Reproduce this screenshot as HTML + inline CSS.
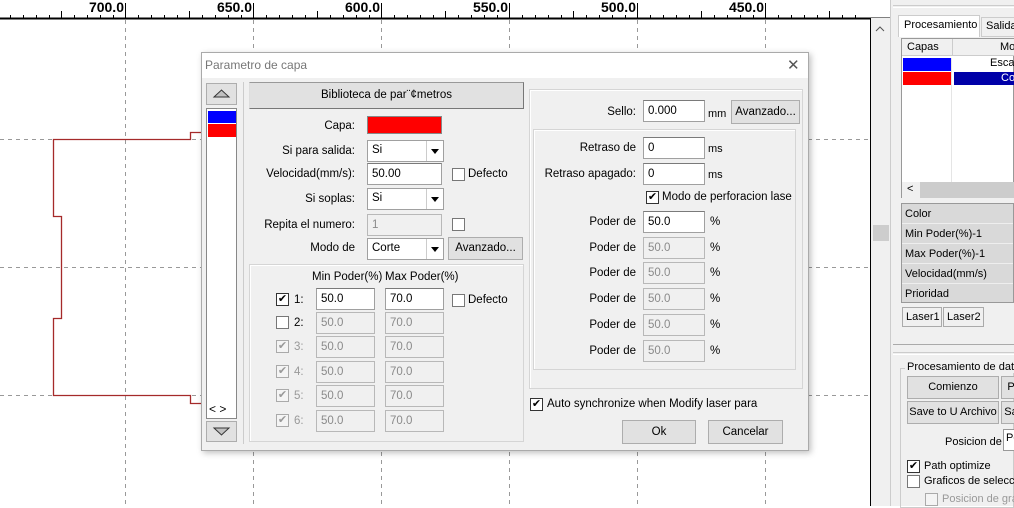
<!DOCTYPE html>
<html><head><meta charset="utf-8"><style>
*{box-sizing:border-box;margin:0;padding:0}
body{width:1014px;height:506px;overflow:hidden;position:relative;background:#fff;font-family:"Liberation Sans",sans-serif;font-size:11.5px;color:#000}
.a{position:absolute}
.lbl{position:absolute;text-align:right;white-space:nowrap}
.t{position:absolute;white-space:nowrap}
.in{position:absolute;background:#fff;border:1px solid #a0a0a0;border-top-color:#7a7a7a;padding:2px 4px;height:22px;line-height:16px}
.dis{background:#f0f0f0;color:#8a8a8a;border-color:#b8b8b8}
.btn{position:absolute;background:#e1e1e1;border:1px solid #adadad;text-align:center;line-height:20px}
.cb{position:absolute;width:13px;height:13px;border:1px solid #333;background:#fff;font-size:11px;line-height:11px;text-align:center}
.cbd{border-color:#aaa;color:#999;background:#f4f4f4}
.grp{position:absolute;border:1px solid #d5d5d5;box-shadow:inset 1px 1px 0 #fff}
.combo{position:absolute;background:#fff;border:1px solid #a0a0a0;height:22px;padding:3px 4px}
.combo:after{content:"";position:absolute;right:0;top:0;width:16px;height:20px;border-left:1px solid #ccc;background:#fff}
.combo i{position:absolute;right:4px;top:8px;border:4px solid transparent;border-top:5px solid #000;z-index:2}
</style></head><body>
<svg class="a" style="left:0;top:0" width="893" height="506">
<rect width="893" height="506" fill="#fff"/>
<line x1="0" y1="18.5" x2="893" y2="18.5" stroke="#000" stroke-width="2"/>
<g stroke="#000" stroke-width="1">
<line x1="125.5" y1="3" x2="125.5" y2="18"/><line x1="253.5" y1="3" x2="253.5" y2="18"/><line x1="381.5" y1="3" x2="381.5" y2="18"/><line x1="509.5" y1="3" x2="509.5" y2="18"/><line x1="637.5" y1="3" x2="637.5" y2="18"/><line x1="765.5" y1="3" x2="765.5" y2="18"/>
<line x1="61.5" y1="11" x2="61.5" y2="18"/><line x1="189.5" y1="11" x2="189.5" y2="18"/><line x1="317.5" y1="11" x2="317.5" y2="18"/><line x1="445.5" y1="11" x2="445.5" y2="18"/><line x1="573.5" y1="11" x2="573.5" y2="18"/><line x1="701.5" y1="11" x2="701.5" y2="18"/><line x1="829.5" y1="11" x2="829.5" y2="18"/>
</g>
<g stroke="#000" stroke-width="1">
<path d="M10.5 15v3M23.5 15v3M36.5 15v3M49.5 15v3M74.5 15v3M87.5 15v3M100.5 15v3M113.5 15v3M138.5 15v3M151.5 15v3M164.5 15v3M177.5 15v3M202.5 15v3M215.5 15v3M228.5 15v3M241.5 15v3M266.5 15v3M279.5 15v3M292.5 15v3M305.5 15v3M330.5 15v3M343.5 15v3M356.5 15v3M369.5 15v3M394.5 15v3M407.5 15v3M420.5 15v3M433.5 15v3M458.5 15v3M471.5 15v3M484.5 15v3M497.5 15v3M522.5 15v3M535.5 15v3M548.5 15v3M561.5 15v3M586.5 15v3M599.5 15v3M612.5 15v3M625.5 15v3M650.5 15v3M663.5 15v3M676.5 15v3M689.5 15v3M714.5 15v3M727.5 15v3M740.5 15v3M753.5 15v3M778.5 15v3M791.5 15v3M804.5 15v3M817.5 15v3M842.5 15v3M855.5 15v3"/></g>
<g font-family="Liberation Sans" font-weight="bold" font-size="14" fill="#000" text-anchor="end">
<text x="124" y="12">700.0</text><text x="252" y="12">650.0</text><text x="380" y="12">600.0</text><text x="508" y="12">550.0</text><text x="636" y="12">500.0</text><text x="764" y="12">450.0</text></g>
<g stroke="#999" stroke-dasharray="4,4" stroke-width="1">
<line x1="125.5" y1="20" x2="125.5" y2="506"/><line x1="253.5" y1="20" x2="253.5" y2="506"/><line x1="381.5" y1="20" x2="381.5" y2="506"/><line x1="509.5" y1="20" x2="509.5" y2="506"/><line x1="637.5" y1="20" x2="637.5" y2="506"/><line x1="765.5" y1="20" x2="765.5" y2="506"/>
<line x1="0" y1="139.5" x2="870" y2="139.5"/><line x1="0" y1="267.5" x2="870" y2="267.5"/><line x1="0" y1="395.5" x2="870" y2="395.5"/></g>
<polyline points="201,132.5 190.5,132.5 190.5,139.5 53.5,139.5 53.5,216.5 61.5,216.5 61.5,318.5 53.5,318.5 53.5,395.5 190.5,395.5 190.5,403.5 201,403.5" fill="none" stroke="#a52a2a" stroke-width="1.3"/>
<rect x="870" y="18" width="20" height="488" fill="#f0f0f0"/>
<line x1="870.5" y1="18" x2="870.5" y2="506" stroke="#000"/>
<path d="M876 31l4-4 4 4" fill="none" stroke="#555"/>
<rect x="873" y="225" width="16" height="16" fill="#cdcdcd"/>
</svg>
<div class="a" style="left:890px;top:0;width:124px;height:506px;background:#f0f0f0;border-left:1px solid #ccc"></div>
<div class="a" style="left:893px;top:5px;width:121px;height:3px;border-top:1px solid #ccc;border-bottom:1px solid #fff"></div>
<div class="a" style="left:898px;top:15px;width:82px;height:22px;background:#fff;border:1px solid #ccc;border-bottom:none;padding:3px 5px;font-size:11px">Procesamiento</div>
<div class="a" style="left:981px;top:17px;width:40px;height:20px;border:1px solid #ccc;padding:2px 4px;font-size:11px">Salida</div>
<div class="a" style="left:901px;top:38px;width:113px;height:160px;background:#fff;border:1px solid #999"></div>
<div class="a" style="left:902px;top:39px;width:112px;height:17px;background:#f0f0f0;border-bottom:1px solid #ccc;font-size:11px"><span class="t" style="left:5px;top:2px">Capas</span><span class="t" style="left:98px;top:2px">Mo</span><span class="a" style="left:50px;top:0;width:1px;height:17px;background:#ccc"></span></div>
<div class="a" style="left:903px;top:58px;width:48px;height:13px;background:#0000ff"></div>
<div class="t" style="left:990px;top:57px;font-size:11px">Esca</div>
<div class="a" style="left:903px;top:72px;width:48px;height:13px;background:#ff0000"></div>
<div class="a" style="left:954px;top:72px;width:60px;height:13px;background:#0000a8;color:#fff;font-size:11px;padding-left:47px;line-height:13px">Co</div>
<div class="a" style="left:951px;top:58px;width:1px;height:124px;background:#e5e5e5"></div>
<div class="a" style="left:902px;top:182px;width:112px;height:16px;background:#f0f0f0"><div class="a" style="left:18px;top:0;width:94px;height:16px;background:#ccc"></div><span class="t" style="left:5px;top:1px;font-size:11px">&lt;</span></div>
<div class="a" style="left:901px;top:203px;width:113px;height:100px;background:#d9d9d9;border:1px solid #999;font-size:11px">
<div style="height:20px;padding:4px 3px;border-bottom:1px solid #eee">Color</div><div style="height:20px;padding:4px 3px;border-bottom:1px solid #eee">Min Poder(%)-1</div><div style="height:20px;padding:4px 3px;border-bottom:1px solid #eee">Max Poder(%)-1</div><div style="height:20px;padding:4px 3px;border-bottom:1px solid #eee">Velocidad(mm/s)</div><div style="height:20px;padding:4px 3px">Prioridad</div></div>
<div class="a" style="left:902px;top:307px;width:40px;height:20px;border:1px solid #aaa;background:#f0f0f0;font-size:11px;padding:3px 3px">Laser1</div>
<div class="a" style="left:943px;top:307px;width:41px;height:20px;border:1px solid #aaa;background:#f0f0f0;font-size:11px;padding:3px 3px">Laser2</div>
<div class="a" style="left:893px;top:344px;width:121px;height:1px;background:#aaa"></div>
<div class="a" style="left:893px;top:352px;width:121px;height:3px;border-top:1px solid #ccc;border-bottom:1px solid #fff"></div>
<div class="a" style="left:900px;top:368px;width:114px;height:140px;border:1px solid #ccc"></div>
<div class="t" style="left:905px;top:361px;background:#f0f0f0;font-size:11px;padding:0 2px">Procesamiento de datos</div>
<div class="btn" style="left:907px;top:376px;width:92px;height:23px;font-size:11px">Comienzo</div>
<div class="btn" style="left:1001px;top:376px;width:20px;height:23px;font-size:11px">P</div>
<div class="btn" style="left:907px;top:401px;width:92px;height:23px;font-size:11px">Save to U Archivo</div>
<div class="btn" style="left:1001px;top:401px;width:20px;height:23px;font-size:11px">Sa</div>
<div class="t" style="left:945px;top:436px;font-size:11px">Posicion de</div>
<div class="a" style="left:1003px;top:429px;width:15px;height:22px;background:#fff;border:1px solid #999;font-size:11px;padding:2px">Po</div>
<div class="cb" style="left:907px;top:460px">✔</div><div class="t" style="left:924px;top:460px;font-size:11px">Path optimize</div>
<div class="cb" style="left:907px;top:475px;border-color:#777"></div><div class="t" style="left:924px;top:475px;font-size:11px">Graficos de seleccion</div>
<div class="cb cbd" style="left:925px;top:493px"></div><div class="t" style="left:942px;top:493px;font-size:11px;color:#999">Posicion de grafico</div>

<div class="a" style="left:201px;top:52px;width:608px;height:399px;background:#f0f0f0;border:1px solid #aaa;box-shadow:2px 2px 6px rgba(0,0,0,.25)"></div>
<div class="a" style="left:202px;top:53px;width:606px;height:25px;background:#fff"></div>
<div class="t" style="left:205px;top:58px;font-size:12px;color:#777">Parametro de capa</div>
<div class="t" style="left:787px;top:56px;font-size:15px;color:#555">✕</div>

<div class="btn" style="left:206px;top:83px;width:31px;height:22px"><svg width="29" height="20"><path d="M7 13L14.5 6L22 13Z" fill="#c0c0c0" stroke="#333"/></svg></div>
<div class="a" style="left:206px;top:108px;width:31px;height:311px;background:#fff;border:1px solid #888"></div>
<div class="a" style="left:208px;top:111px;width:28px;height:12px;background:#0000ff"></div>
<div class="a" style="left:208px;top:124px;width:28px;height:13px;background:#ff0000"></div>
<div class="t" style="left:209px;top:402px;font-size:12px">&lt; &gt;</div>
<div class="btn" style="left:206px;top:421px;width:31px;height:21px"><svg width="29" height="19"><path d="M7 6L14.5 13L22 6Z" fill="#c0c0c0" stroke="#333"/></svg></div>
<div class="a" style="left:243px;top:82px;width:1px;height:362px;background:#ccc"></div>

<div class="btn" style="left:249px;top:82px;width:275px;height:27px;line-height:25px;border-color:#999 #777 #777 #ddd">Biblioteca de par¨¢metros</div>
<div class="lbl" style="left:250px;width:105px;top:120px">Capa:</div>
<div class="a" style="left:367px;top:116px;width:75px;height:18px;background:#ff0000;border:1px solid #888"></div>
<div class="lbl" style="left:250px;width:105px;top:145px">Si para salida:</div>
<div class="combo" style="left:367px;top:140px;width:77px">Si<i></i></div>
<div class="lbl" style="left:250px;width:105px;top:168px">Velocidad(mm/s):</div>
<div class="in" style="left:367px;top:163px;width:75px">50.00</div>
<div class="cb" style="left:452px;top:168px;border-color:#777"></div><div class="t" style="left:468px;top:168px">Defecto</div>
<div class="lbl" style="left:250px;width:105px;top:193px">Si soplas:</div>
<div class="combo" style="left:367px;top:188px;width:77px">Si<i></i></div>
<div class="lbl" style="left:250px;width:105px;top:219px">Repita el numero:</div>
<div class="in dis" style="left:367px;top:214px;width:75px">1</div>
<div class="cb" style="left:452px;top:218px;border-color:#777"></div>
<div class="lbl" style="left:250px;width:105px;top:242px">Modo de</div>
<div class="combo" style="left:367px;top:238px;width:77px">Corte<i></i></div>
<div class="btn" style="left:448px;top:237px;width:75px;height:23px">Avanzado...</div>

<div class="grp" style="left:249px;top:264px;width:275px;height:178px"></div>
<div class="t" style="left:312px;top:271px">Min Poder(%)</div>
<div class="t" style="left:385px;top:271px">Max Poder(%)</div>
<div class="cb" style="left:276px;top:293px">✔</div><div class="t" style="left:294px;top:294px">1:</div>
<div class="in" style="left:316px;top:288px;width:59px">50.0</div><div class="in" style="left:385px;top:288px;width:59px">70.0</div>
<div class="cb" style="left:452px;top:294px;border-color:#777"></div><div class="t" style="left:468px;top:294px">Defecto</div>
<div class="cb" style="left:276px;top:316px;border-color:#777"></div><div class="t" style="left:294px;top:317px">2:</div>
<div class="in dis" style="left:316px;top:312px;width:59px">50.0</div><div class="in dis" style="left:385px;top:312px;width:59px">70.0</div>
<div class="cb cbd" style="left:276px;top:340px">✔</div><div class="t" style="left:294px;top:341px;color:#999">3:</div>
<div class="in dis" style="left:316px;top:336px;width:59px">50.0</div><div class="in dis" style="left:385px;top:336px;width:59px">70.0</div>
<div class="cb cbd" style="left:276px;top:365px">✔</div><div class="t" style="left:294px;top:366px;color:#999">4:</div>
<div class="in dis" style="left:316px;top:361px;width:59px">50.0</div><div class="in dis" style="left:385px;top:361px;width:59px">70.0</div>
<div class="cb cbd" style="left:276px;top:389px">✔</div><div class="t" style="left:294px;top:390px;color:#999">5:</div>
<div class="in dis" style="left:316px;top:385px;width:59px">50.0</div><div class="in dis" style="left:385px;top:385px;width:59px">70.0</div>
<div class="cb cbd" style="left:276px;top:414px">✔</div><div class="t" style="left:294px;top:415px;color:#999">6:</div>
<div class="in dis" style="left:316px;top:410px;width:59px">50.0</div><div class="in dis" style="left:385px;top:410px;width:59px">70.0</div>

<div class="grp" style="left:529px;top:89px;width:274px;height:300px"></div>
<div class="lbl" style="left:540px;width:96px;top:106px">Sello:</div>
<div class="in" style="left:643px;top:100px;width:62px">0.000</div>
<div class="t" style="left:708px;top:108px;font-size:11px">mm</div>
<div class="btn" style="left:731px;top:100px;width:69px;height:24px;line-height:22px">Avanzado...</div>
<div class="grp" style="left:533px;top:129px;width:263px;height:241px"></div>
<div class="lbl" style="left:540px;width:96px;top:142px">Retraso de</div>
<div class="in" style="left:643px;top:137px;width:62px">0</div><div class="t" style="left:708px;top:143px;font-size:11px">ms</div>
<div class="lbl" style="left:535px;width:101px;top:168px">Retraso apagado:</div>
<div class="in" style="left:643px;top:163px;width:62px">0</div><div class="t" style="left:708px;top:169px;font-size:11px">ms</div>
<div class="cb" style="left:646px;top:191px">✔</div><div class="t" style="left:662px;top:191px">Modo de perforacion lase</div>
<div class="lbl" style="left:540px;width:96px;top:216px">Poder de</div><div class="in" style="left:643px;top:211px;width:62px">50.0</div><div class="t" style="left:710px;top:216px">%</div>
<div class="lbl" style="left:540px;width:96px;top:242px">Poder de</div><div class="in dis" style="left:643px;top:237px;width:62px">50.0</div><div class="t" style="left:710px;top:242px">%</div>
<div class="lbl" style="left:540px;width:96px;top:267px">Poder de</div><div class="in dis" style="left:643px;top:262px;width:62px">50.0</div><div class="t" style="left:710px;top:267px">%</div>
<div class="lbl" style="left:540px;width:96px;top:293px">Poder de</div><div class="in dis" style="left:643px;top:288px;width:62px">50.0</div><div class="t" style="left:710px;top:293px">%</div>
<div class="lbl" style="left:540px;width:96px;top:319px">Poder de</div><div class="in dis" style="left:643px;top:314px;width:62px">50.0</div><div class="t" style="left:710px;top:319px">%</div>
<div class="lbl" style="left:540px;width:96px;top:345px">Poder de</div><div class="in dis" style="left:643px;top:340px;width:62px">50.0</div><div class="t" style="left:710px;top:345px">%</div>

<div class="cb" style="left:530px;top:398px">✔</div><div class="t" style="left:547px;top:398px">Auto synchronize when Modify laser para</div>
<div class="btn" style="left:622px;top:420px;width:74px;height:24px;line-height:22px">Ok</div>
<div class="btn" style="left:708px;top:420px;width:75px;height:24px;line-height:22px">Cancelar</div>
</body></html>
